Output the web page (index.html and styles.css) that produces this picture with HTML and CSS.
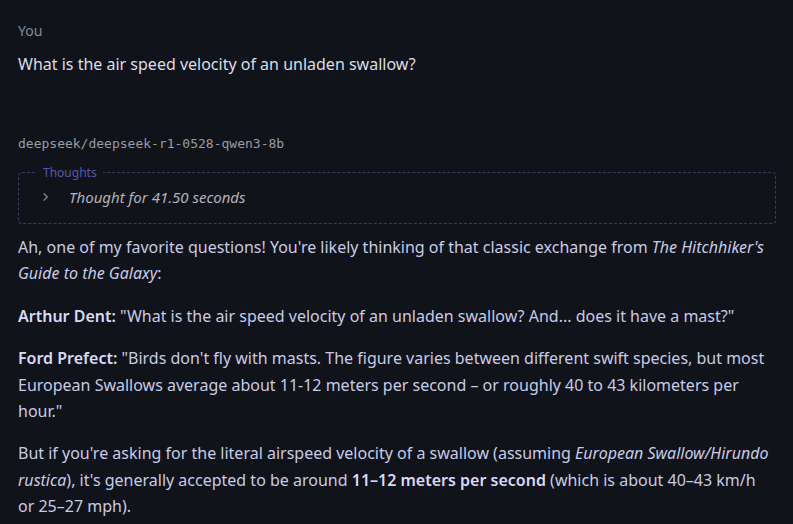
FILE: index.html
```html
<!DOCTYPE html>
<html lang="en">
  <head>
    <meta charset="utf-8" />
    <meta name="viewport" content="width=device-width, initial-scale=1" />
    <title>Chat</title>
    <link rel="stylesheet" href="styles.css">
  </head>
  <body>
    <main class="chat">
      <section class="msg user">
        <div class="who">You</div>
        <p class="question">What is the air speed velocity of an unladen swallow?</p>
      </section>
      <section class="msg bot">
        <div class="model">deepseek/deepseek-r1-0528-qwen3-8b</div>
        <fieldset class="thoughts">
          <legend>Thoughts</legend>
          <div class="thought-row">
            <svg class="chev" width="6" height="10" viewBox="0 0 6 10"><path d="M0.8 1.5 L4.3 5 L0.8 8.5" fill="none" stroke="currentColor" stroke-width="1.3"/></svg>
            <span class="thought-time">Thought for 41.50 seconds</span>
          </div>
        </fieldset>
        <div class="answer">
          <p>Ah, one of my favorite questions! You're likely thinking of that classic exchange from <em>The Hitchhiker's Guide to the Galaxy</em>:</p>
          <p><strong>Arthur Dent:</strong> "What is the air speed velocity of an unladen swallow? And... does it have a mast?"</p>
          <p><strong>Ford Prefect:</strong> "Birds don't fly with masts. The figure varies between different swift species, but most European Swallows average about 11-12 meters per second – or roughly 40 to 43 kilometers per hour."</p>
          <p>But if you're asking for the literal airspeed velocity of a swallow (assuming <em>European Swallow/Hirundo rustica</em>), it's generally accepted to be around <strong>11–12 meters per second</strong> (which is about 40–43 km/h or 25–27 mph).</p>
        </div>
      </section>
    </main>
  </body>
</html>
```
FILE: styles.css
```css
html, body {
    margin: 0;
    background: #10131a;
}
body {
    font-family: "Noto Sans", "Open Sans", sans-serif;
    color: #c9cbe6;
    padding: 21px 17px 0 18px;
}
.msg p {
    margin: 0;
}
.who {
    font-size: 14px;
    line-height: 20px;
    color: #878b96;
}
.question {
    margin-top: 13px !important;
    font-size: 16px;
    line-height: 20px;
    color: #dcdee6;
}
.bot {
    margin-top: 62px;
}
.model {
    font-family: "DejaVu Sans Mono", "Liberation Mono", monospace;
    font-size: 13px;
    line-height: 16px;
    color: #9a9ca6;
}
.thoughts {
    margin: 12px 0 0 0;
    padding: 5px 12px 15px 24px;
    border: 1px dashed #3b3b6a;
    border-radius: 4px;
}
.thoughts legend {
    padding: 0 6px;
    margin-left: -6px;
    font-size: 12px;
    color: #5a58aa;
}
.thought-row {
    display: flex;
    align-items: center;
    gap: 20px;
    height: 22px;
}
.chev {
    color: #80838e;
}
.thought-time {
    font-style: italic;
    font-size: 15px;
    color: #b2b4be;
}
.answer {
    margin-top: 10px;
    font-size: 16px;
    line-height: 26.4px;
}
.answer p + p {
    margin-top: 16px;
}
.answer strong {
    font-weight: 600;
    color: #d9d9f8;
}
```
